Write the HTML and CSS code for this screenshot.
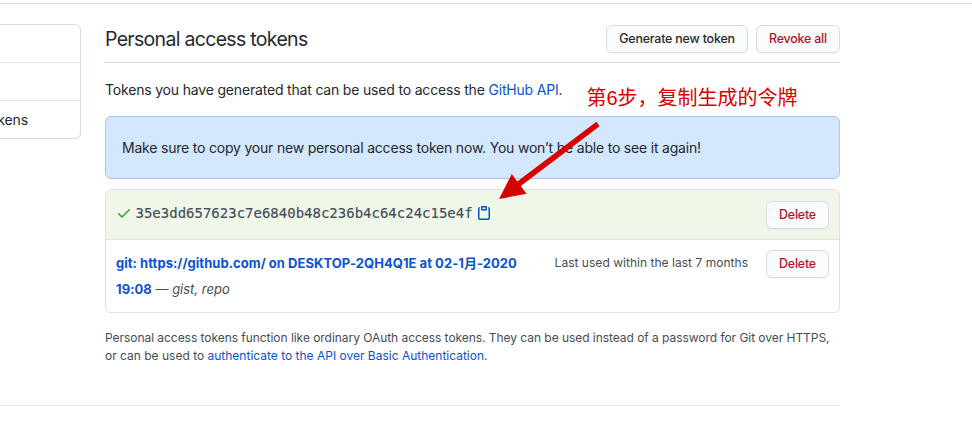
FILE: index.html
```
<!DOCTYPE html>
<html lang="en">
<head>
<meta charset="utf-8">
<title>Personal access tokens</title>
<link rel="stylesheet" href="styles.css">
</head>
<body>
<div class="page">
  <nav class="menu">
    <div class="menu-item"></div>
    <div class="menu-item"></div>
    <div class="menu-item"><span class="menu-label">kens</span></div>
  </nav>
  <main class="content">
    <header class="subhead">
      <h2 class="title">Personal access tokens</h2>
      <div class="actions">
        <button class="btn generate">Generate new token</button>
        <button class="btn danger revoke">Revoke all</button>
      </div>
    </header>
    <p class="intro">Tokens you have generated that can be used to access the <a href="#">GitHub API</a>.</p>
    <div class="flash">Make sure to copy your new personal access token now. You won’t be able to see it again!</div>
    <div class="list">
      <div class="row fresh">
        <svg class="check" width="16" height="16" viewBox="0 0 16 16"><path fill-rule="evenodd" d="M13.78 4.22a.75.75 0 010 1.06l-7.25 7.25a.75.75 0 01-1.06 0L2.22 9.28a.75.75 0 011.06-1.06L6 10.94l6.72-6.72a.75.75 0 011.06 0z"/></svg>
        <code class="token">35e3dd657623c7e6840b48c236b4c64c24c15e4f</code>
        <svg class="clip" width="16" height="16" viewBox="0 0 16 16"><path fill-rule="evenodd" d="M5.75 1a.75.75 0 00-.75.75v3c0 .414.336.75.75.75h4.5a.75.75 0 00.75-.75v-3a.75.75 0 00-.75-.75h-4.5zm.75 3V2.5h3V4h-3zm-2.874-.467a.75.75 0 00-.752-1.298A1.75 1.75 0 002 3.75v9.5c0 .966.784 1.75 1.75 1.75h8.5A1.75 1.75 0 0014 13.25v-9.5a1.75 1.75 0 00-.874-1.515.75.75 0 10-.752 1.298.25.25 0 01.126.217v9.5a.25.25 0 01-.25.25h-8.5a.25.25 0 01-.25-.25v-9.5a.25.25 0 01.126-.217z"/></svg>
        <button class="btn danger delete">Delete</button>
      </div>
      <div class="row">
        <div class="desc"><a class="name" href="#">git: https://github.com/ on DESKTOP-2QH4Q1E at 02-1月-2020<br>19:08</a> <span class="scopes">— <em>gist, repo</em></span></div>
        <span class="used">Last used within the last 7 months</span>
        <button class="btn danger delete">Delete</button>
      </div>
    </div>
    <p class="note"><span class="n1">Personal access tokens function like ordinary OAuth access tokens. They can be used instead of a password for Git over HTTPS,</span><br>or can be used to <a href="#">authenticate to the API over Basic Authentication</a>.</p>
  </main>
</div>
<hr class="rule">
<div class="callout">第6步，复制生成的令牌</div>
<svg class="arrow" width="110" height="90" viewBox="490 115 110 90"><path d="M596.4 121.8L599.6 126.2L520.8 186L526.5 193.8L499 199L511.8 174L517.3 181.5Z"/></svg>
</body>
</html>
```
FILE: styles.css
```
* { box-sizing: border-box; }
body {
  position: relative;
  margin: 0;
  padding-top: 3px;
  height: 426px;
  overflow: hidden;
  background: #fff;
  color: #24292e;
  font: 14px/21px Inter, "Noto Sans CJK SC", sans-serif;
}
a { color: #0b53ce; text-decoration: none; }
.page {
  display: flex;
  gap: 24px;
  padding-top: 20px;
  border-top: 1px solid #d8dbe0;
}
.menu {
  flex: none;
  width: 81px;
  height: 115px;
  border: 1px solid #d8dbe3;
  border-left: 0;
  border-radius: 0 6px 6px 0;
  overflow: hidden;
}
.menu-item {
  display: flex;
  justify-content: flex-end;
  align-items: center;
  height: 38px;
  padding-right: 52px;
  white-space: nowrap;
}
.menu-item:first-child { height: 37px; }
.menu-item + .menu-item { border-top: 1px solid #e1e4e8; }
.menu-label { letter-spacing: -0.1px; }
.content { width: 735px; height: 381px; }
.rule { width: 840px; height: 1px; margin: 0; border: 0; background: #e1e4e8; }
.subhead {
  display: flex;
  justify-content: space-between;
  height: 39px;
  border-bottom: 1px solid #d8dbe3;
}
.title { margin: 0; font-size: 19.5px; line-height: 31px; font-weight: 400; letter-spacing: -0.69px; }
.actions { display: flex; gap: 8px; padding-top: 1px; }
.btn {
  flex: none;
  height: 28px;
  padding: 0;
  border: 1px solid #d8dbdf;
  border-radius: 6px;
  background: #fafbfc;
  color: #24292e;
  box-shadow: 0 1px 0 rgba(27, 31, 35, .04);
  font: 550 12.4px/20px Inter, sans-serif;
  letter-spacing: -0.18px;
}
.danger { color: #b5122b; }
.generate { width: 142px; }
.revoke { width: 84px; }
.delete { width: 63px; }
.intro { margin: 16px 0; letter-spacing: -0.18px; white-space: nowrap; }
.flash {
  height: 63px;
  padding: 20px 16px;
  border: 1px solid #abc3e6;
  border-radius: 6px;
  background: #d3e7ff;
  letter-spacing: -0.2px;
  white-space: nowrap;
}
.list { height: 124px; margin-top: 10px; border: 1px solid #dfe2e4; border-radius: 6px; overflow: hidden; }
.row { display: flex; align-items: flex-start; padding: 10px 10px 0; }
.fresh { height: 50px; padding-top: 11px; border-bottom: 1px solid #dee2e1; background: #eff7e9; }
.check { margin-top: 4px; fill: #35a13a; }
.token { margin: 2px 3.5px 0; color: #444d56; font: 14px/21px "DejaVu Sans Mono", monospace; -webkit-text-stroke: .15px #444d56; }
.clip { margin-top: 4px; fill: #0b53ce; }
.fresh .delete { margin-left: auto; }
.desc { flex: 1; font-size: 13px; line-height: 26px; white-space: nowrap; }
.name { font-weight: 650; letter-spacing: .04px; }
.scopes { color: #444d56; }
.used { margin: 3px 18px 0 0; color: #444d56; font-size: 12px; line-height: 20px; letter-spacing: .03px; }
.note { margin: 16px 0 0; color: #444d56; font-size: 12px; line-height: 18px; white-space: nowrap; }
.n1 { letter-spacing: -0.045px; }
.callout {
  position: absolute;
  left: 586.5px;
  top: 83px;
  color: #d70000;
  font: 20px/30px "Liberation Sans", "Noto Sans CJK SC", sans-serif;
  white-space: nowrap;
}
.arrow { position: absolute; left: 490px; top: 115px; fill: #d70000; }
```
